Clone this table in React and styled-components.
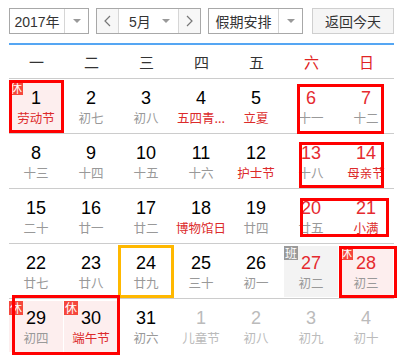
import React from "react";
import styled, { createGlobalStyle } from "styled-components";

const weeks = [
  [
    { d: 1, l: "劳动节", hol: true, rest: true },
    { d: 2, l: "初七" },
    { d: 3, l: "初八" },
    { d: 4, l: "五四青...", hol: true },
    { d: 5, l: "立夏", hol: true },
    { d: 6, l: "十一", wk: true },
    { d: 7, l: "十二", wk: true },
  ],
  [
    { d: 8, l: "十三" },
    { d: 9, l: "十四" },
    { d: 10, l: "十五" },
    { d: 11, l: "十六" },
    { d: 12, l: "护士节", hol: true },
    { d: 13, l: "十八", wk: true },
    { d: 14, l: "母亲节", hol: true, wk: true },
  ],
  [
    { d: 15, l: "二十" },
    { d: 16, l: "廿一" },
    { d: 17, l: "廿二" },
    { d: 18, l: "博物馆日", hol: true },
    { d: 19, l: "廿四" },
    { d: 20, l: "廿五", wk: true },
    { d: 21, l: "小满", hol: true, wk: true },
  ],
  [
    { d: 22, l: "廿七" },
    { d: 23, l: "廿八" },
    { d: 24, l: "廿九", today: true },
    { d: 25, l: "三十" },
    { d: 26, l: "初一" },
    { d: 27, l: "初二", wk: true, work: true },
    { d: 28, l: "初三", wk: true, rest: true },
  ],
  [
    { d: 29, l: "初四", rest: true },
    { d: 30, l: "端午节", hol: true, rest: true },
    { d: 31, l: "初六" },
    { d: 1, l: "儿童节", other: true },
    { d: 2, l: "初八", other: true },
    { d: 3, l: "初九", other: true },
    { d: 4, l: "初十", other: true },
  ],
];

const weekdays = ["一", "二", "三", "四", "五", "六", "日"];

// red frames drawn over the calendar
const marks = [
  { x: 9, y: 80, w: 55, h: 53 },
  { x: 297, y: 84, w: 87, h: 50 },
  { x: 299, y: 142, w: 85, h: 46 },
  { x: 300, y: 198, w: 89, h: 39 },
  { x: 339, y: 246, w: 58, h: 52 },
  { x: 12, y: 295, w: 108, h: 60 },
];

const Chevron = ({ dir }) => (
  <svg width="7" height="12" viewBox="0 0 7 12">
    <polyline
      points={dir === "left" ? "6,1 1,6 6,11" : "1,1 6,6 1,11"}
      fill="none"
      stroke="#777"
      strokeWidth="1.2"
    />
  </svg>
);

const App = () => {
  return (
    <>
      <Global />
      <Page>
        <TopBar>
          <Select $w={80}>
            <SelText>2017年</SelText>
            <SelArrow>
              <Tri />
            </SelArrow>
          </Select>
          <MonthGroup>
            <Step>
              <Chevron dir="left" />
            </Step>
            <MonthMid>
              <span>5月</span>
              <Tri />
            </MonthMid>
            <Step>
              <Chevron dir="right" />
            </Step>
          </MonthGroup>
          <Select $w={95}>
            <SelText>假期安排</SelText>
            <SelArrow>
              <Tri />
            </SelArrow>
          </Select>
          <TodayBtn>返回今天</TodayBtn>
        </TopBar>
        <Head>
          {weekdays.map((w, i) => (
            <HeadCell key={w} $red={i > 4}>
              {w}
            </HeadCell>
          ))}
        </Head>
        {weeks.map((wk, r) => (
          <Row key={r}>
            {wk.map((c, i) => (
              <Cell key={i}>
                <Day $rest={c.rest} $work={c.work} $today={c.today}>
                  {c.rest && <Badge>休</Badge>}
                  {c.work && <Badge $grey>班</Badge>}
                  <Num $red={c.wk} $other={c.other}>
                    {c.d}
                  </Num>
                  <Lunar $red={c.hol && !c.other} $other={c.other}>
                    {c.l}
                  </Lunar>
                </Day>
              </Cell>
            ))}
          </Row>
        ))}
        {marks.map((m, i) => (
          <Mark key={i} $x={m.x} $y={m.y} $w={m.w} $h={m.h} />
        ))}
      </Page>
    </>
  );
};

export default App;

const Global = createGlobalStyle`
  body {
    margin: 0;
    background: #fff;
    font-family: "Liberation Sans", "Noto Sans CJK SC", sans-serif;
  }
`;

const Page = styled.div`
  position: relative;
  width: 403px;
  height: 362px;
  overflow: hidden;
  padding-left: 9px;
  box-sizing: border-box;
`;

const TopBar = styled.div`
  display: flex;
  align-items: stretch;
  height: 26px;
  padding-top: 8px;
  padding-bottom: 9px;
  width: 385px;
  border-bottom: 2px solid #55a6f3;
  font-family: "Noto Sans CJK SC", sans-serif;
  font-size: 14px;
  color: #333;
`;

const Select = styled.div`
  display: flex;
  width: ${(p) => p.$w}px;
  box-sizing: border-box;
  border: 1px solid #a8a8a8;
  background: #fff;
  margin-right: 7px;
`;

const SelText = styled.div`
  flex: 1;
  display: flex;
  align-items: center;
  justify-content: center;
  border-right: 1px solid #d6d6d6;
  font-family: "Liberation Sans", "Noto Sans CJK SC", sans-serif;
`;

const SelArrow = styled.div`
  width: 23px;
  display: flex;
  align-items: center;
  justify-content: center;
`;

const Tri = styled.span`
  display: inline-block;
  width: 0;
  height: 0;
  border-left: 4px solid transparent;
  border-right: 4px solid transparent;
  border-top: 4px solid #999;
`;

const MonthGroup = styled.div`
  display: flex;
  width: 105px;
  box-sizing: border-box;
  border: 1px solid #a8a8a8;
  margin-right: 7px;
`;

const Step = styled.div`
  width: 21px;
  display: flex;
  align-items: center;
  justify-content: center;
  background: #f7f7f7;
`;

const MonthMid = styled.div`
  flex: 1;
  display: flex;
  align-items: center;
  justify-content: space-between;
  padding: 0 8px 0 10px;
  border-left: 1px solid #d6d6d6;
  border-right: 1px solid #d6d6d6;
  background: #fff;
  font-family: "Liberation Sans", "Noto Sans CJK SC", sans-serif;
`;

const TodayBtn = styled.div`
  margin-left: 2px;
  width: 82px;
  box-sizing: border-box;
  border: 1px solid #cfcfcf;
  background: #f5f5f5;
  display: flex;
  align-items: center;
  justify-content: center;
`;

const Head = styled.div`
  display: grid;
  grid-template-columns: repeat(7, 55px);
  height: 33px;
  align-items: center;
  font-family: "Noto Sans CJK SC", sans-serif;
  font-size: 15px;
`;

const HeadCell = styled.div`
  text-align: center;
  color: ${(p) => (p.$red ? "#e02424" : "#333")};
`;

const Row = styled.div`
  display: grid;
  grid-template-columns: repeat(7, 55px);
  border-top: 1px solid #cccccc;
  width: 385px;
`;

const Cell = styled.div`
  height: 54px;
  box-sizing: border-box;
  padding: 2px 1px 1px 0;
`;

const Day = styled.div`
  position: relative;
  height: 100%;
  box-sizing: border-box;
  padding-top: 7px;
  text-align: center;
  background: ${(p) => (p.$rest ? "#fdeeee" : p.$work ? "#f3f3f3" : "transparent")};
  outline: ${(p) => (p.$today ? "3px solid #ffb800" : "none")};
  outline-offset: -2px;
`;

const Badge = styled.span`
  position: absolute;
  left: 0;
  top: 0;
  width: 14px;
  height: 14px;
  line-height: 14px;
  font-size: 12px;
  font-family: "Noto Sans CJK SC", sans-serif;
  color: #fff;
  background: ${(p) => (p.$grey ? "#9a9a9a" : "#f5473c")};
`;

const Num = styled.div`
  font-size: 18px;
  line-height: 20px;
  color: ${(p) => (p.$other ? "#bbbbbb" : p.$red ? "#e52a2f" : "#000")};
`;

const Lunar = styled.div`
  margin-top: 1px;
  font-size: 12.5px;
  line-height: 17px;
  white-space: nowrap;
  font-family: "Noto Sans CJK SC", sans-serif;
  color: ${(p) => (p.$other ? "#bbbbbb" : p.$red ? "#dc2a2a" : "#999")};
`;

const Mark = styled.div`
  position: absolute;
  left: ${(p) => p.$x}px;
  top: ${(p) => p.$y}px;
  width: ${(p) => p.$w}px;
  height: ${(p) => p.$h}px;
  box-sizing: border-box;
  border: 3px solid #ff0000;
  pointer-events: none;
`;
